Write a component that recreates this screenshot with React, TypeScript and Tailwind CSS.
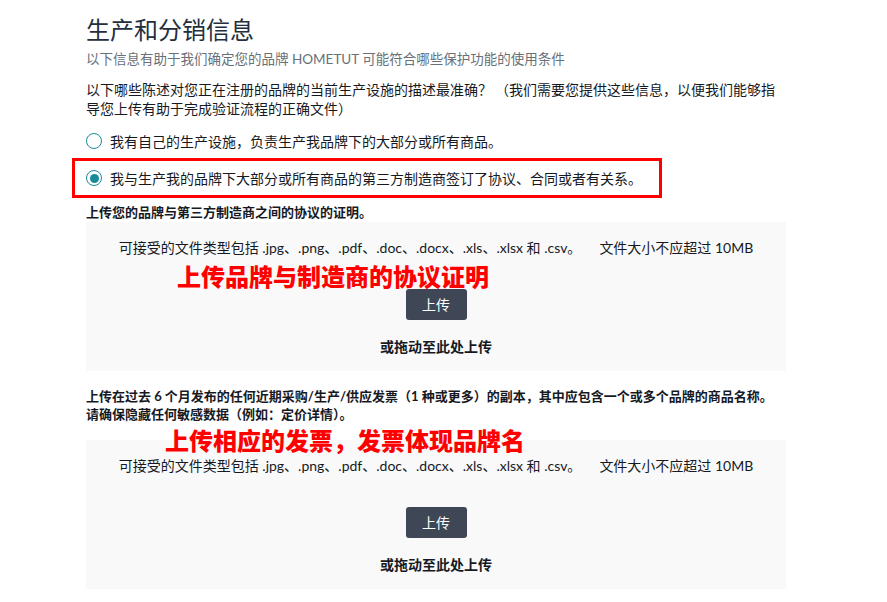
import React from "react";

const font = "font-['Lato','Noto_Sans_CJK_SC',sans-serif]";

function Radio({ checked }: { checked?: boolean }) {
  return (
    <span className="flex h-[16px] w-[16px] shrink-0 items-center justify-center rounded-full border-[1.5px] border-[#1a8a9a] bg-white">
      {checked && <span className="h-[9px] w-[9px] rounded-full bg-[#1a8a9a]" />}
    </span>
  );
}

function UploadBox() {
  return (
    <div className="flex h-[149px] w-[700px] flex-col items-center bg-[#f9f9fa] pt-[16px] pb-[14px]">
      <p className="text-[14px] leading-[20px] text-[#16191f]">
        可接受的文件类型包括 .jpg、.png、.pdf、.doc、.docx、.xls、.xlsx 和 .csv。
        <span className="ml-[18px]">文件大小不应超过 10MB</span>
      </p>
      <button className="mt-[31px] h-[31px] w-[61px] rounded-[3px] bg-[#3f4756] text-[14px] text-white">
        上传
      </button>
      <p className="mt-[17px] text-[14px] font-bold leading-[20px] text-[#16191f]">或拖动至此处上传</p>
    </div>
  );
}

export default function App() {
  return (
    <div className={`relative h-[602px] w-[887px] overflow-hidden bg-white pl-[86px] pt-[14px] ${font}`}>
      <h1 className="text-[24px] leading-[32px] text-[#232f3e]">生产和分销信息</h1>
      <p className="mt-[4px] text-[13.5px] leading-[18px] text-[#687078]">
        以下信息有助于我们确定您的品牌 HOMETUT 可能符合哪些保护功能的使用条件
      </p>

      <p className="mt-[12px] w-[700px] text-[14px] leading-[19px] text-[#16191f]">
        以下哪些陈述对您正在注册的品牌的当前生产设施的描述最准确？
        <span className="ml-[3px]">（我们需要您提供这些信息，以便我们能够指</span>
        <br />
        导您上传有助于完成验证流程的正确文件）
      </p>

      <label className="mt-[13px] flex h-[20px] items-center gap-[8px] text-[14px] text-[#16191f]">
        <Radio />
        我有自己的生产设施，负责生产我品牌下的大部分或所有商品。
      </label>

      <label className="relative mt-[17px] flex h-[20px] w-fit items-center gap-[8px] text-[14px] text-[#16191f]">
        <Radio checked />
        我与生产我的品牌下大部分或所有商品的第三方制造商签订了协议、合同或者有关系。
        <span className="absolute -top-[10px] -bottom-[10px] -left-[14px] -right-[20px] border-[3px] border-[#ff0000]" />
      </label>

      <p className="mt-[15px] text-[13px] font-bold leading-[18px] text-[#16191f]">
        上传您的品牌与第三方制造商之间的协议的证明。
      </p>
      <div className="mt-[1px]">
        <UploadBox />
      </div>

      <p className="mt-[16px] text-[13px] font-bold leading-[18px] text-[#16191f]">
        上传在过去 6 个月发布的任何近期采购/生产/供应发票（1 种或更多）的副本，其中应包含一个或多个品牌的商品名称。
        <br />
        请确保隐藏任何敏感数据（例如：定价详情）。
      </p>
      <div className="mt-[17px]">
        <UploadBox />
      </div>

      <span className="absolute left-[177px] top-[261px] font-['Noto_Sans_CJK_SC',sans-serif] text-[24px] font-black leading-[30px] text-[#ff0000]">
        上传品牌与制造商的协议证明
      </span>
      <span className="absolute left-[165px] top-[425px] font-['Noto_Sans_CJK_SC',sans-serif] text-[24px] font-black leading-[30px] text-[#ff0000]">
        上传相应的发票，发票体现品牌名
      </span>
    </div>
  );
}
